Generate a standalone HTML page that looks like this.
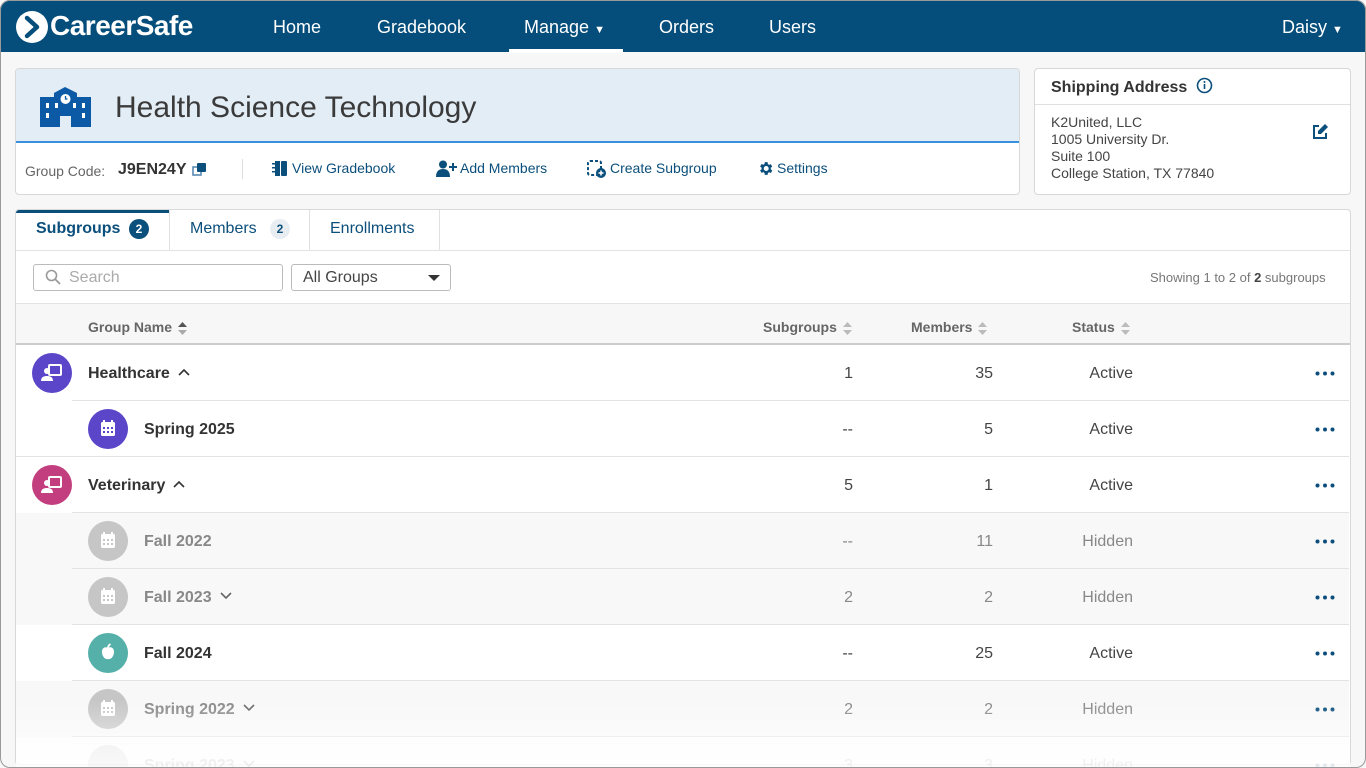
<!DOCTYPE html>
<html style="overflow:hidden;height:768px"><head><meta charset="utf-8"><style>
*{box-sizing:border-box;margin:0;padding:0}
body{width:1366px;height:768px;overflow:hidden;font-family:"Liberation Sans",sans-serif;background:#f7f7f7;position:relative}
.frame{position:absolute;inset:0;border:1px solid #9a9a9a;border-radius:10px;pointer-events:none;z-index:50}
.nav{position:absolute;left:0;top:0;width:1366px;height:52px;background:#054d7a;color:#fff;border-radius:10px 10px 0 0}
.nav a{position:absolute;top:17px;font-size:18px;color:#fff}
.abs{position:absolute}
.card{position:absolute;background:#fff;border:1px solid #d8d8d8;border-radius:4px}
.link{position:absolute;top:160px;font-size:14px;color:#0b4f7c}
.row{position:absolute;left:16px;width:1333px;height:56px}
.row .bd{position:absolute;left:56px;right:0;bottom:0;border-bottom:1px solid #e3e3e3}
.circ{position:absolute;width:40px;height:40px;border-radius:50%;top:8px}
.name{position:absolute;top:20px;font-size:16px;font-weight:bold;color:#333;white-space:nowrap}
.name svg{margin-left:8px;vertical-align:middle;position:relative;top:-2px}
.num{position:absolute;top:20px;font-size:16px;color:#444;text-align:right}
.dots{position:absolute;left:1299px;top:26px;width:20px;height:5px}
.th{position:absolute;top:319px;font-size:14px;font-weight:bold;color:#666}
.sort{display:inline-block;vertical-align:middle;margin-left:6px;width:9px;height:13px}
.gray .name,.gray .num{color:#888}
.gray{background:#f8f8f8}
</style></head><body>
<div class="nav">
 <svg class="abs" style="left:15px;top:10px" width="34" height="34" viewBox="0 0 34 34"><circle cx="17" cy="17" r="16" fill="#fff"/><path d="M12 8l10 9-10 9" stroke="#054d7a" stroke-width="4.5" fill="none" stroke-linecap="round" stroke-linejoin="round"/></svg>
 <span class="abs" style="left:50px;top:10px;font-size:28px;font-weight:bold;letter-spacing:-0.5px">CareerSafe</span>
 <a style="left:273px">Home</a><a style="left:377px">Gradebook</a><a style="left:524px">Manage <span style="font-size:11px">&#9660;</span></a>
 <div class="abs" style="left:509px;top:49px;width:114px;height:4px;background:#fff"></div>
 <a style="left:659px">Orders</a><a style="left:769px">Users</a><a style="left:1282px">Daisy <span style="font-size:11px">&#9660;</span></a>
</div>

<div class="card" style="left:15px;top:68px;width:1005px;height:127px;overflow:hidden">
 <div class="abs" style="left:0;top:0;width:1005px;height:74px;background:#e3edf6;border-bottom:2px solid #3b90de"></div>
 <svg class="abs" style="left:24px;top:18px" width="51" height="40" viewBox="0 0 51 40"><path d="M0 10h14V6l11-6 12 6v4h14v30H31V29h-11v11H0z" fill="#0c5aa6"/><circle cx="25.5" cy="12" r="5" fill="#fff"/><path d="M25.5 9v3h2" stroke="#0c5aa6" stroke-width="1.3" fill="none"/><g fill="#fff"><rect x="6" y="16" width="3" height="5"/><rect x="6" y="26" width="3" height="5"/><rect x="42" y="16" width="3" height="5"/><rect x="42" y="26" width="3" height="5"/><rect x="15" y="16" width="3" height="5"/><rect x="33" y="16" width="3" height="5"/></g></svg>
 <div class="abs" style="left:99px;top:22px;font-size:30px;color:#3a3a3a">Health Science Technology</div>
 <div class="abs" style="left:9px;top:94px;font-size:14px;color:#666">Group Code:</div>
 <div class="abs" style="left:102px;top:92px;font-size:16px;font-weight:bold;color:#333">J9EN24Y</div>
 <svg class="abs" style="left:176px;top:93px" width="15" height="15"><rect x="1" y="5" width="8" height="8" fill="none" stroke="#5b8ab3" stroke-width="1.6"/><rect x="5" y="1" width="9" height="9" rx="1" fill="#0b4f7c"/></svg>
 <div class="abs" style="left:226px;top:90px;width:1px;height:20px;background:#ddd"></div>
</div>
<svg class="abs" style="left:272px;top:160px" width="16" height="17"><rect x="3" y="1" width="5" height="15" fill="#0b4f7c"/><rect x="9" y="1" width="6" height="15" rx="1" fill="#0b4f7c"/><g fill="#0b4f7c"><rect x="0" y="3" width="3" height="1.5"/><rect x="0" y="7" width="3" height="1.5"/><rect x="0" y="11" width="3" height="1.5"/></g></svg>
<div class="link" style="left:292px">View Gradebook</div>
<svg class="abs" style="left:436px;top:160px" width="22" height="17"><circle cx="7" cy="4.5" r="4" fill="#0b4f7c"/><path d="M0 17c0-6 3-8 7-8s7 2 7 8z" fill="#0b4f7c"/><path d="M17 3v8M13 7h8" stroke="#0b4f7c" stroke-width="2"/></svg>
<div class="link" style="left:460px">Add Members</div>
<svg class="abs" style="left:587px;top:160px" width="20" height="18"><rect x="1" y="1" width="13" height="14" rx="2" fill="none" stroke="#0b4f7c" stroke-width="2" stroke-dasharray="3 2"/><circle cx="14" cy="13" r="5" fill="#0b4f7c"/><path d="M14 10.5v5M11.5 13h5" stroke="#fff" stroke-width="1.5"/></svg>
<div class="link" style="left:610px">Create Subgroup</div>
<svg class="abs" style="left:757px;top:160px" width="17" height="17" viewBox="0 0 24 24"><path fill="#0b4f7c" d="M19.4 13a7.5 7.5 0 000-2l2.1-1.6-2-3.5-2.5 1a7 7 0 00-1.7-1L15 3h-4l-.4 2.7a7 7 0 00-1.7 1l-2.5-1-2 3.5L6.5 11a7.5 7.5 0 000 2l-2.1 1.6 2 3.5 2.5-1a7 7 0 001.7 1L11 21h4l.4-2.7a7 7 0 001.7-1l2.5 1 2-3.5zM13 15.5a3.5 3.5 0 110-7 3.5 3.5 0 010 7z"/></svg>
<div class="link" style="left:777px">Settings</div>

<div class="card" style="left:1034px;top:68px;width:317px;height:127px">
 <div class="abs" style="left:16px;top:10px;font-size:16px;font-weight:bold;color:#333">Shipping Address</div>
 <svg class="abs" style="left:161px;top:8px" width="17" height="17"><circle cx="8.5" cy="8.5" r="7" fill="none" stroke="#0b4f7c" stroke-width="1.6"/><rect x="7.7" y="7" width="1.6" height="5" fill="#0b4f7c"/><circle cx="8.5" cy="5" r="1" fill="#0b4f7c"/></svg>
 <div class="abs" style="left:0;top:35px;width:315px;border-top:1px solid #e0e0e0"></div>
 <div class="abs" style="left:16px;top:45px;font-size:14px;line-height:17px;color:#444">K2United, LLC<br>1005 University Dr.<br>Suite 100<br>College Station, TX 77840</div>
 <svg class="abs" style="left:277px;top:54px" width="17" height="17" viewBox="0 0 17 17"><path d="M7 3H2v12h12V10" stroke="#0b4f7c" stroke-width="2" fill="none"/><path d="M13 1l3 3-7 7H6V8z" fill="#0b4f7c"/></svg>
</div>

<div class="card" style="left:15px;top:209px;width:1336px;height:556px;overflow:hidden">
 <div class="abs" style="left:0;top:0;width:153px;height:41px;border-top:3px solid #0b4f7c"></div>
 <div class="abs" style="left:20px;top:10px;font-size:16px;font-weight:bold;color:#0b4f7c">Subgroups</div>
 <div class="abs" style="left:113px;top:9px;width:20px;height:20px;border-radius:50%;background:#0b4f7c;color:#fff;font-size:12px;font-weight:bold;text-align:center;line-height:20px">2</div>
 <div class="abs" style="left:153px;top:0;width:1px;height:41px;background:#e0e0e0"></div>
 <div class="abs" style="left:174px;top:10px;font-size:16px;color:#0b4f7c">Members</div>
 <div class="abs" style="left:254px;top:9px;width:20px;height:20px;border-radius:50%;background:#e8edf1;color:#0b4f7c;font-size:12px;font-weight:bold;text-align:center;line-height:20px">2</div>
 <div class="abs" style="left:293px;top:0;width:1px;height:41px;background:#e0e0e0"></div>
 <div class="abs" style="left:314px;top:10px;font-size:16px;color:#0b4f7c">Enrollments</div>
 <div class="abs" style="left:423px;top:0;width:1px;height:41px;background:#e0e0e0"></div>
 <div class="abs" style="left:0;top:40px;width:1336px;border-top:1px solid #e3e3e3"></div>
 <div class="abs" style="left:17px;top:54px;width:250px;height:27px;border:1px solid #bbb;border-radius:3px"></div>
 <svg class="abs" style="left:29px;top:59px" width="16" height="16"><circle cx="6.5" cy="6.5" r="5" fill="none" stroke="#999" stroke-width="1.6"/><path d="M10 10l5 5" stroke="#999" stroke-width="1.8"/></svg>
 <div class="abs" style="left:53px;top:59px;font-size:16px;color:#aaa">Search</div>
 <div class="abs" style="left:275px;top:54px;width:160px;height:27px;border:1px solid #bbb;border-radius:3px"></div>
 <div class="abs" style="left:287px;top:59px;font-size:16px;color:#444">All Groups</div>
 <div class="abs" style="left:412px;top:65px;border-left:6px solid transparent;border-right:6px solid transparent;border-top:6px solid #333"></div>
 <div class="abs" style="left:1134px;top:60px;font-size:13px;color:#777">Showing 1 to 2 of <b style="color:#444">2</b> subgroups</div>
 <div class="abs" style="left:0;top:93px;width:1336px;height:42px;background:#f7f7f7;border-top:1px solid #e3e3e3;border-bottom:2px solid #ccc"></div>
</div>
<div class="th" style="left:88px">Group Name<svg class="sort" viewBox="0 0 9 13"><path d="M4.5 0L9 5H0z" fill="#555"/><path d="M4.5 13L9 8H0z" fill="#aaa"/></svg></div>
<div class="th" style="left:763px">Subgroups<svg class="sort" viewBox="0 0 9 13"><path d="M4.5 0L9 5H0zM4.5 13L9 8H0z" fill="#bbb"/></svg></div>
<div class="th" style="left:911px">Members<svg class="sort" viewBox="0 0 9 13"><path d="M4.5 0L9 5H0zM4.5 13L9 8H0z" fill="#bbb"/></svg></div>
<div class="th" style="left:1072px">Status<svg class="sort" viewBox="0 0 9 13"><path d="M4.5 0L9 5H0zM4.5 13L9 8H0z" fill="#bbb"/></svg></div>

<div class="row" style="top:345px"><div class="bd"></div>
 <div class="circ" style="left:16px;background:#5b45c8"><svg width="40" height="40"><rect x="17" y="12" width="12" height="10" rx="1" fill="none" stroke="#fff" stroke-width="2"/><circle cx="15" cy="18" r="3" fill="#fff"/><path d="M9 28c0-4 3-5 6-5s6 1 6 5z" fill="#fff"/></svg></div>
 <div class="name" style="left:72px">Healthcare<svg width="12" height="8"><path d="M1 7l5-5 5 5" stroke="#333" stroke-width="1.6" fill="none"/></svg></div>
 <div class="num" style="left:790px;width:47px">1</div><div class="num" style="left:930px;width:47px">35</div><div class="num" style="left:1050px;width:67px">Active</div>
 <svg class="dots"><circle cx="2.5" cy="2.5" r="2" fill="#0b4f7c"/><circle cx="10" cy="2.5" r="2" fill="#0b4f7c"/><circle cx="17.5" cy="2.5" r="2" fill="#0b4f7c"/></svg></div>

<div class="row" style="top:401px"><div class="bd" style="left:0"></div>
 <div class="circ" style="left:72px;background:#5b45c8"><svg width="40" height="40"><rect x="13" y="13" width="14" height="14" rx="1.5" fill="#fff"/><rect x="15" y="11" width="2" height="4" fill="#fff"/><rect x="23" y="11" width="2" height="4" fill="#fff"/><g fill="#5b45c8"><rect x="15" y="18" width="2" height="2"/><rect x="19" y="18" width="2" height="2"/><rect x="23" y="18" width="2" height="2"/><rect x="15" y="22" width="2" height="2"/><rect x="19" y="22" width="2" height="2"/><rect x="23" y="22" width="2" height="2"/></g></svg></div>
 <div class="name" style="left:128px">Spring 2025</div>
 <div class="num" style="left:790px;width:47px">--</div><div class="num" style="left:930px;width:47px">5</div><div class="num" style="left:1050px;width:67px">Active</div>
 <svg class="dots"><circle cx="2.5" cy="2.5" r="2" fill="#0b4f7c"/><circle cx="10" cy="2.5" r="2" fill="#0b4f7c"/><circle cx="17.5" cy="2.5" r="2" fill="#0b4f7c"/></svg></div>

<div class="row" style="top:457px"><div class="bd"></div>
 <div class="circ" style="left:16px;background:#c23e7e"><svg width="40" height="40"><rect x="17" y="12" width="12" height="10" rx="1" fill="none" stroke="#fff" stroke-width="2"/><circle cx="15" cy="18" r="3" fill="#fff"/><path d="M9 28c0-4 3-5 6-5s6 1 6 5z" fill="#fff"/></svg></div>
 <div class="name" style="left:72px">Veterinary<svg width="12" height="8"><path d="M1 7l5-5 5 5" stroke="#333" stroke-width="1.6" fill="none"/></svg></div>
 <div class="num" style="left:790px;width:47px">5</div><div class="num" style="left:930px;width:47px">1</div><div class="num" style="left:1050px;width:67px">Active</div>
 <svg class="dots"><circle cx="2.5" cy="2.5" r="2" fill="#0b4f7c"/><circle cx="10" cy="2.5" r="2" fill="#0b4f7c"/><circle cx="17.5" cy="2.5" r="2" fill="#0b4f7c"/></svg></div>

<div class="row gray" style="top:513px"><div class="bd"></div>
 <div class="circ" style="left:72px;background:#c6c6c6"><svg width="40" height="40"><rect x="13" y="13" width="14" height="14" rx="1.5" fill="#fff"/><rect x="15" y="11" width="2" height="4" fill="#fff"/><rect x="23" y="11" width="2" height="4" fill="#fff"/><g fill="#c6c6c6"><rect x="15" y="18" width="2" height="2"/><rect x="19" y="18" width="2" height="2"/><rect x="23" y="18" width="2" height="2"/><rect x="15" y="22" width="2" height="2"/><rect x="19" y="22" width="2" height="2"/><rect x="23" y="22" width="2" height="2"/></g></svg></div>
 <div class="name" style="left:128px">Fall 2022</div>
 <div class="num" style="left:790px;width:47px">--</div><div class="num" style="left:930px;width:47px">11</div><div class="num" style="left:1050px;width:67px">Hidden</div>
 <svg class="dots"><circle cx="2.5" cy="2.5" r="2" fill="#0b4f7c"/><circle cx="10" cy="2.5" r="2" fill="#0b4f7c"/><circle cx="17.5" cy="2.5" r="2" fill="#0b4f7c"/></svg></div>

<div class="row gray" style="top:569px"><div class="bd"></div>
 <div class="circ" style="left:72px;background:#c6c6c6"><svg width="40" height="40"><rect x="13" y="13" width="14" height="14" rx="1.5" fill="#fff"/><rect x="15" y="11" width="2" height="4" fill="#fff"/><rect x="23" y="11" width="2" height="4" fill="#fff"/><g fill="#c6c6c6"><rect x="15" y="18" width="2" height="2"/><rect x="19" y="18" width="2" height="2"/><rect x="23" y="18" width="2" height="2"/><rect x="15" y="22" width="2" height="2"/><rect x="19" y="22" width="2" height="2"/><rect x="23" y="22" width="2" height="2"/></g></svg></div>
 <div class="name" style="left:128px">Fall 2023<svg width="12" height="8"><path d="M1 1l5 5 5-5" stroke="#666" stroke-width="1.6" fill="none"/></svg></div>
 <div class="num" style="left:790px;width:47px">2</div><div class="num" style="left:930px;width:47px">2</div><div class="num" style="left:1050px;width:67px">Hidden</div>
 <svg class="dots"><circle cx="2.5" cy="2.5" r="2" fill="#0b4f7c"/><circle cx="10" cy="2.5" r="2" fill="#0b4f7c"/><circle cx="17.5" cy="2.5" r="2" fill="#0b4f7c"/></svg></div>

<div class="row" style="top:625px;background:#fff"><div class="bd"></div>
 <div class="circ" style="left:72px;background:#55b0aa"><svg width="40" height="40"><path d="M20 15c-2-1.5-6-1-6 4 0 4 3 8 6 7 3 1 6-3 6-7 0-5-4-5.5-6-4z" fill="#fff"/><path d="M20 15c0-2 1-3 2.5-4" stroke="#fff" stroke-width="1.8" fill="none"/></svg></div>
 <div class="name" style="left:128px">Fall 2024</div>
 <div class="num" style="left:790px;width:47px">--</div><div class="num" style="left:930px;width:47px">25</div><div class="num" style="left:1050px;width:67px">Active</div>
 <svg class="dots"><circle cx="2.5" cy="2.5" r="2" fill="#0b4f7c"/><circle cx="10" cy="2.5" r="2" fill="#0b4f7c"/><circle cx="17.5" cy="2.5" r="2" fill="#0b4f7c"/></svg></div>

<div class="row gray" style="top:681px"><div class="bd"></div>
 <div class="circ" style="left:72px;background:#c6c6c6"><svg width="40" height="40"><rect x="13" y="13" width="14" height="14" rx="1.5" fill="#fff"/><rect x="15" y="11" width="2" height="4" fill="#fff"/><rect x="23" y="11" width="2" height="4" fill="#fff"/><g fill="#c6c6c6"><rect x="15" y="18" width="2" height="2"/><rect x="19" y="18" width="2" height="2"/><rect x="23" y="18" width="2" height="2"/><rect x="15" y="22" width="2" height="2"/><rect x="19" y="22" width="2" height="2"/><rect x="23" y="22" width="2" height="2"/></g></svg></div>
 <div class="name" style="left:128px">Spring 2022<svg width="12" height="8"><path d="M1 1l5 5 5-5" stroke="#666" stroke-width="1.6" fill="none"/></svg></div>
 <div class="num" style="left:790px;width:47px">2</div><div class="num" style="left:930px;width:47px">2</div><div class="num" style="left:1050px;width:67px">Hidden</div>
 <svg class="dots"><circle cx="2.5" cy="2.5" r="2" fill="#0b4f7c"/><circle cx="10" cy="2.5" r="2" fill="#0b4f7c"/><circle cx="17.5" cy="2.5" r="2" fill="#0b4f7c"/></svg></div>

<div class="row gray" style="top:737px;height:30px;overflow:hidden;opacity:.4">
 <div class="circ" style="left:72px;background:#c6c6c6"></div>
 <div class="name" style="left:128px">Spring 2023<svg width="12" height="8"><path d="M1 1l5 5 5-5" stroke="#666" stroke-width="1.6" fill="none"/></svg></div>
 <div class="num" style="left:790px;width:47px">3</div><div class="num" style="left:930px;width:47px">3</div><div class="num" style="left:1050px;width:67px">Hidden</div>
 <svg class="dots"><circle cx="2.5" cy="2.5" r="2" fill="#0b4f7c"/><circle cx="10" cy="2.5" r="2" fill="#0b4f7c"/><circle cx="17.5" cy="2.5" r="2" fill="#0b4f7c"/></svg></div>

<div class="abs" style="left:16px;top:700px;width:1334px;height:67px;background:linear-gradient(rgba(255,255,255,0),rgba(255,255,255,.75))"></div>
<div class="frame"></div>
</body></html>
